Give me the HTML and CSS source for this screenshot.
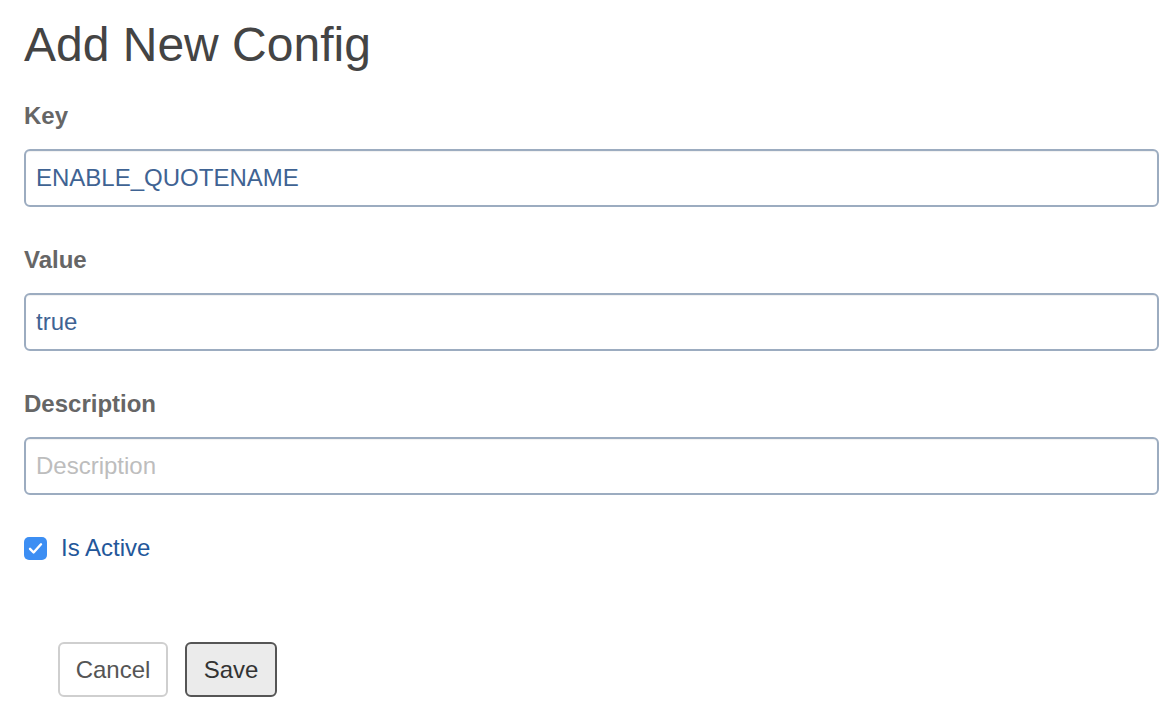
FILE: index.html
```html
<!DOCTYPE html>
<html>
<head>
<meta charset="utf-8">
<link rel="stylesheet" href="styles.css">
</head>
<body>
<div class="page">
  <h1 class="title">Add New Config</h1>
  <form class="form">
    <div class="group">
      <label class="label">Key</label>
      <input class="input" type="text" value="ENABLE_QUOTENAME">
    </div>
    <div class="group">
      <label class="label">Value</label>
      <input class="input" type="text" value="true">
    </div>
    <div class="group">
      <label class="label">Description</label>
      <input class="input" type="text" placeholder="Description">
    </div>
    <div class="check-row">
      <span class="checkbox">
        <svg width="23" height="23" viewBox="0 0 23 23"><path d="M6 11.8 L9.6 15.5 L17 7.3" fill="none" stroke="#fff" stroke-width="2.4" stroke-linecap="round" stroke-linejoin="round"/></svg>
      </span>
      <span class="check-label">Is Active</span>
    </div>
    <div class="actions">
      <button type="button" class="btn btn-cancel">Cancel</button>
      <button type="button" class="btn btn-save">Save</button>
    </div>
  </form>
</div>
</body>
</html>
```

FILE: styles.css
```css
html, body {
  margin: 0;
  padding: 0;
  background: #fff;
}
body {
  font-family: "Liberation Sans", Arial, Helvetica, sans-serif;
}
.page {
  padding: 17px 17px 0 24px;
}
.title {
  margin: 0;
  font-size: 48px;
  line-height: 56px;
  font-weight: 400;
  color: #444;
}
.form {
  display: flex;
  flex-direction: column;
  margin-top: 29px;
}
.group {
  display: flex;
  flex-direction: column;
  margin-bottom: 41px;
}
.group + .group .label {
  margin-top: -2px;
}
.label {
  font-size: 24px;
  line-height: 28px;
  font-weight: 700;
  color: #666;
  margin-bottom: 19px;
}
.input {
  box-sizing: border-box;
  height: 58px;
  width: 100%;
  margin: 0;
  padding: 0 10px;
  border: 2px solid #9cacc0;
  border-radius: 6px;
  box-shadow: inset 0 1px 1px rgba(0,0,0,0.06);
  font-family: "Liberation Sans", Arial, Helvetica, sans-serif;
  font-size: 24px;
  color: #3f6393;
  outline: none;
  background: #fff;
}
.input::placeholder {
  color: #bdbdbd;
}
.check-row {
  display: flex;
  align-items: center;
  height: 28px;
  margin-top: -2px;
}
.checkbox {
  width: 23px;
  height: 23px;
  border-radius: 5px;
  background: #3c8ef3;
  display: flex;
  margin-right: 14px;
}
.check-label {
  font-size: 24px;
  line-height: 28px;
  color: #23579a;
}
.actions {
  display: flex;
  gap: 17px;
  margin-top: 80px;
  padding-left: 34px;
}
.btn {
  box-sizing: border-box;
  height: 55px;
  border-radius: 6px;
  font-family: "Liberation Sans", Arial, Helvetica, sans-serif;
  font-size: 24px;
  margin: 0;
  cursor: pointer;
}
.btn-cancel {
  width: 110px;
  background: #fff;
  border: 2px solid #cfcfcf;
  color: #555;
}
.btn-save {
  width: 92px;
  background: #ebebeb;
  border: 2px solid #555;
  color: #333;
}
```
